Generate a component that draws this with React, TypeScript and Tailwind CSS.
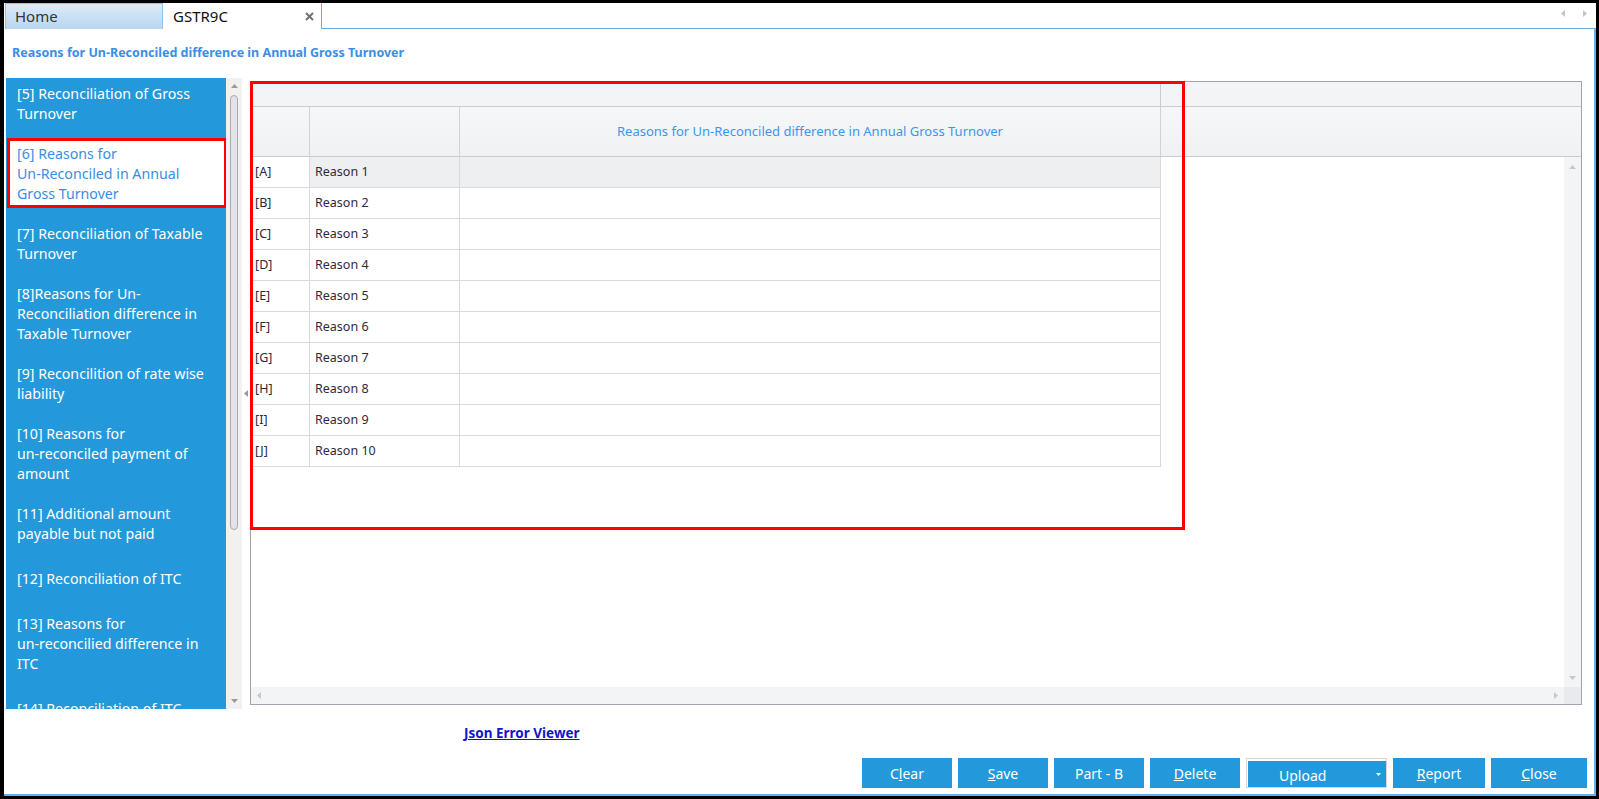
import React from "react";

type Item = { lines: string[]; selected?: boolean };

const items: Item[] = [
  { lines: ["[5] Reconciliation of Gross", "Turnover"] },
  { lines: ["[6] Reasons for", "Un-Reconciled in Annual", "Gross Turnover"], selected: true },
  { lines: ["[7] Reconciliation of Taxable", "Turnover"] },
  { lines: ["[8]Reasons for Un-", "Reconciliation difference in", "Taxable Turnover"] },
  { lines: ["[9] Reconcilition of rate wise", "liability"] },
  { lines: ["[10] Reasons for", "un-reconciled payment of", "amount"] },
  { lines: ["[11] Additional amount", "payable but not paid"] },
  { lines: ["[12] Reconciliation of ITC"] },
  { lines: ["[13] Reasons for", "un-reconcilied difference in", "ITC"] },
  { lines: ["[14] Reconciliation of ITC"] },
];

const rows = ["A", "B", "C", "D", "E", "F", "G", "H", "I", "J"];

function SideItem({ item }: { item: Item }) {
  if (item.selected) {
    return (
      <div className="pt-[4px] pb-[6px] ml-[1px] mr-[-1px]">
        <div className="border-[3px] border-[#ff0000] bg-white pl-[7px] pt-[3px] pb-[1px] text-[#3a8de2]">
          {item.lines.map((l) => (
            <div key={l} className="h-[20px] leading-[20px] whitespace-nowrap">
              {l}
            </div>
          ))}
        </div>
      </div>
    );
  }
  return (
    <div className="min-h-[50px] py-[10px] pl-[11px] flex flex-col justify-center text-white">
      {item.lines.map((l) => (
        <div key={l} className="h-[20px] leading-[20px] whitespace-nowrap">
          {l}
        </div>
      ))}
    </div>
  );
}

function Tri({ dir, color, w = 7, h = 4 }: { dir: "up" | "down" | "left" | "right"; color: string; w?: number; h?: number }) {
  if (dir === "up")
    return (
      <svg width={w} height={h} viewBox="0 0 7 4">
        <polygon points="0,4 7,4 3.5,0" fill={color} />
      </svg>
    );
  if (dir === "down")
    return (
      <svg width={w} height={h} viewBox="0 0 7 4">
        <polygon points="0,0 7,0 3.5,4" fill={color} />
      </svg>
    );
  if (dir === "left")
    return (
      <svg width={h} height={w} viewBox="0 0 4 7">
        <polygon points="4,0 4,7 0,3.5" fill={color} />
      </svg>
    );
  return (
    <svg width={h} height={w} viewBox="0 0 4 7">
      <polygon points="0,0 0,7 4,3.5" fill={color} />
    </svg>
  );
}

function Btn({ w, children }: { w: string; children: React.ReactNode }) {
  return (
    <div className={`${w} h-[30px] bg-[#2399db] text-white text-[14px] flex items-center justify-center`}>
      <span>{children}</span>
    </div>
  );
}

export default function App() {
  return (
    <div className="w-[1599px] h-[799px] bg-black pt-[3px] pl-[4px] pr-[3px] pb-[3px] overflow-hidden font-['Noto_Sans',sans-serif]">
      <div className="flex flex-col w-full h-full bg-white">
        {/* Tab strip */}
        <div className="flex h-[26px] shrink-0">
          <div className="w-[158px] ml-[1px] h-full bg-gradient-to-b from-[#dcebf8] to-[#b8d6f1] border border-b-0 border-[#93c2ea] pl-[9px] text-[15px] leading-[24px] text-[#333333]">
            Home
          </div>
          <div className="w-[159px] h-full bg-white border-r border-[#6aaee6] flex items-center justify-between pl-[10px] pr-[7px]">
            <span className="text-[15px] leading-[24px] text-[#111111]">GSTR9C</span>
            <svg width="9" height="9" viewBox="0 0 9 9">
              <line x1="1" y1="1" x2="8" y2="8" stroke="#707070" strokeWidth="2" />
              <line x1="8" y1="1" x2="1" y2="8" stroke="#707070" strokeWidth="2" />
            </svg>
          </div>
          <div className="flex-1 border-b border-[#6aaee6] flex items-start justify-end gap-[18px] pr-[9px] pt-[7px]">
            <Tri dir="left" color="#c4c4c4" />
            <Tri dir="right" color="#c4c4c4" />
          </div>
        </div>

        {/* Content panel */}
        <div className="flex-1 flex flex-col border-r-2 border-b-2 border-[#6aaee6]">
          <div className="h-[49px] shrink-0 pt-[16px] pl-[8px] text-[12.5px] font-bold leading-[16px] text-[#3b8ee6]">
            Reasons for Un-Reconciled difference in Annual Gross Turnover
          </div>

          {/* Main row */}
          <div className="flex h-[631px] shrink-0 pl-[2px] items-start">
            {/* Sidebar */}
            <div className="w-[220px] h-full bg-[#2399db] overflow-hidden text-[14.2px]">
              <div className="mt-[-4px]">
                {items.map((it) => (
                  <SideItem key={it.lines[0]} item={it} />
                ))}
              </div>
            </div>
            {/* Sidebar scrollbar */}
            <div className="w-[16px] h-full bg-[#f1f1f1] flex flex-col items-center">
              <div className="mt-[6px]">
                <Tri dir="up" color="#9a9a9a" />
              </div>
              <div className="mt-[7px] w-[8px] h-[435px] rounded-[4px] border border-[#a9abb3] bg-[#e2e3e7]" />
              <div className="flex-1" />
              <div className="mb-[6px]">
                <Tri dir="down" color="#9a9a9a" />
              </div>
            </div>
            {/* Splitter */}
            <div className="w-[8px] h-full flex items-center justify-center">
              <Tri dir="left" color="#9a9a9a" />
            </div>

            {/* Grid */}
            <div className="relative w-[1332px] h-[624px] mt-[3px] border border-[#a2a5b0] flex flex-col bg-white">
              {/* band */}
              <div className="h-[25px] shrink-0 flex border-b border-[#c9cbd2] bg-[#f3f4f6]">
                <div className="w-[910px] border-r border-[#c9cbd2]" />
                <div className="flex-1" />
              </div>
              {/* header */}
              <div className="h-[50px] shrink-0 flex border-b border-[#c9cbd2] bg-gradient-to-b from-[#f6f7f9] to-[#f0f1f3]">
                <div className="w-[59px] border-r border-[#d0d2d8]" />
                <div className="w-[150px] border-r border-[#d0d2d8]" />
                <div className="w-[701px] border-r border-[#d0d2d8] flex items-center justify-center text-[13px] text-[#3c96f0]">
                  Reasons for Un-Reconciled difference in Annual Gross Turnover
                </div>
                <div className="flex-1" />
              </div>
              {/* body */}
              <div className="flex-1 flex min-h-0">
                <div className="flex-1">
                  {rows.map((r, i) => (
                    <div key={r} className="h-[31px] w-[910px] flex border-b border-[#d9dadf] text-[12.5px] text-[#2b2b40]">
                      <div className="w-[59px] border-r border-[#d9dadf] pl-[4px] flex items-center bg-white">[{r}]</div>
                      <div className={`w-[150px] border-r border-[#d9dadf] pl-[5px] flex items-center ${i === 0 ? "bg-[#eeeff1]" : "bg-white"}`}>
                        Reason {i + 1}
                      </div>
                      <div className={`w-[701px] border-r border-[#d9dadf] ${i === 0 ? "bg-[#eeeff1]" : "bg-white"}`} />
                    </div>
                  ))}
                </div>
                <div className="w-[17px] bg-[#f3f4f6] flex flex-col items-center">
                  <div className="mt-[8px]">
                    <Tri dir="up" color="#c6c8ce" />
                  </div>
                  <div className="flex-1" />
                  <div className="mb-[7px]">
                    <Tri dir="down" color="#c6c8ce" />
                  </div>
                </div>
              </div>
              {/* horizontal scrollbar */}
              <div className="h-[17px] shrink-0 flex">
                <div className="flex-1 bg-[#f3f4f6] flex items-center justify-between px-[6px]">
                  <Tri dir="left" color="#c6c8ce" />
                  <Tri dir="right" color="#c6c8ce" />
                </div>
                <div className="w-[17px] bg-[#e9eaed]" />
              </div>

              {/* red annotation */}
              <div className="absolute left-[-1px] top-[-1px] w-[935px] h-[449px] border-[3px] border-[#ff0000] pointer-events-none" />
            </div>
          </div>

          {/* Json Error Viewer */}
          <div className="mt-[15px] pl-[460px] h-[16px] leading-[16px]">
            <span className="text-[13.5px] font-bold underline text-[#1414c8]">Json Error Viewer</span>
          </div>

          {/* Buttons */}
          <div className="mt-[18px] flex justify-end gap-[6px] pr-[7px]">
            <Btn w="w-[90px]">
              C<span className="underline">l</span>ear
            </Btn>
            <Btn w="w-[90px]">
              <span className="underline">S</span>ave
            </Btn>
            <Btn w="w-[90px]">Part - B</Btn>
            <Btn w="w-[90px]">
              <span className="underline">D</span>elete
            </Btn>
            <div className="w-[141px] h-[30px] border border-[#d6d6d6] pt-[2px] pl-[1px] flex">
              <div className="flex-1 bg-[#2399db] relative">
                <div className="pl-[31px] pt-[5px] leading-[20px] text-[14px] text-white">Upload</div>
                <div className="absolute right-[5px] top-[12px]">
                  <svg width="5" height="3" viewBox="0 0 5 3">
                    <polygon points="0,0 5,0 2.5,3" fill="#ffffff" />
                  </svg>
                </div>
              </div>
            </div>
            <Btn w="w-[92px]">
              <span className="underline">R</span>eport
            </Btn>
            <Btn w="w-[96px]">
              <span className="underline">C</span>lose
            </Btn>
          </div>
        </div>
      </div>
    </div>
  );
}
